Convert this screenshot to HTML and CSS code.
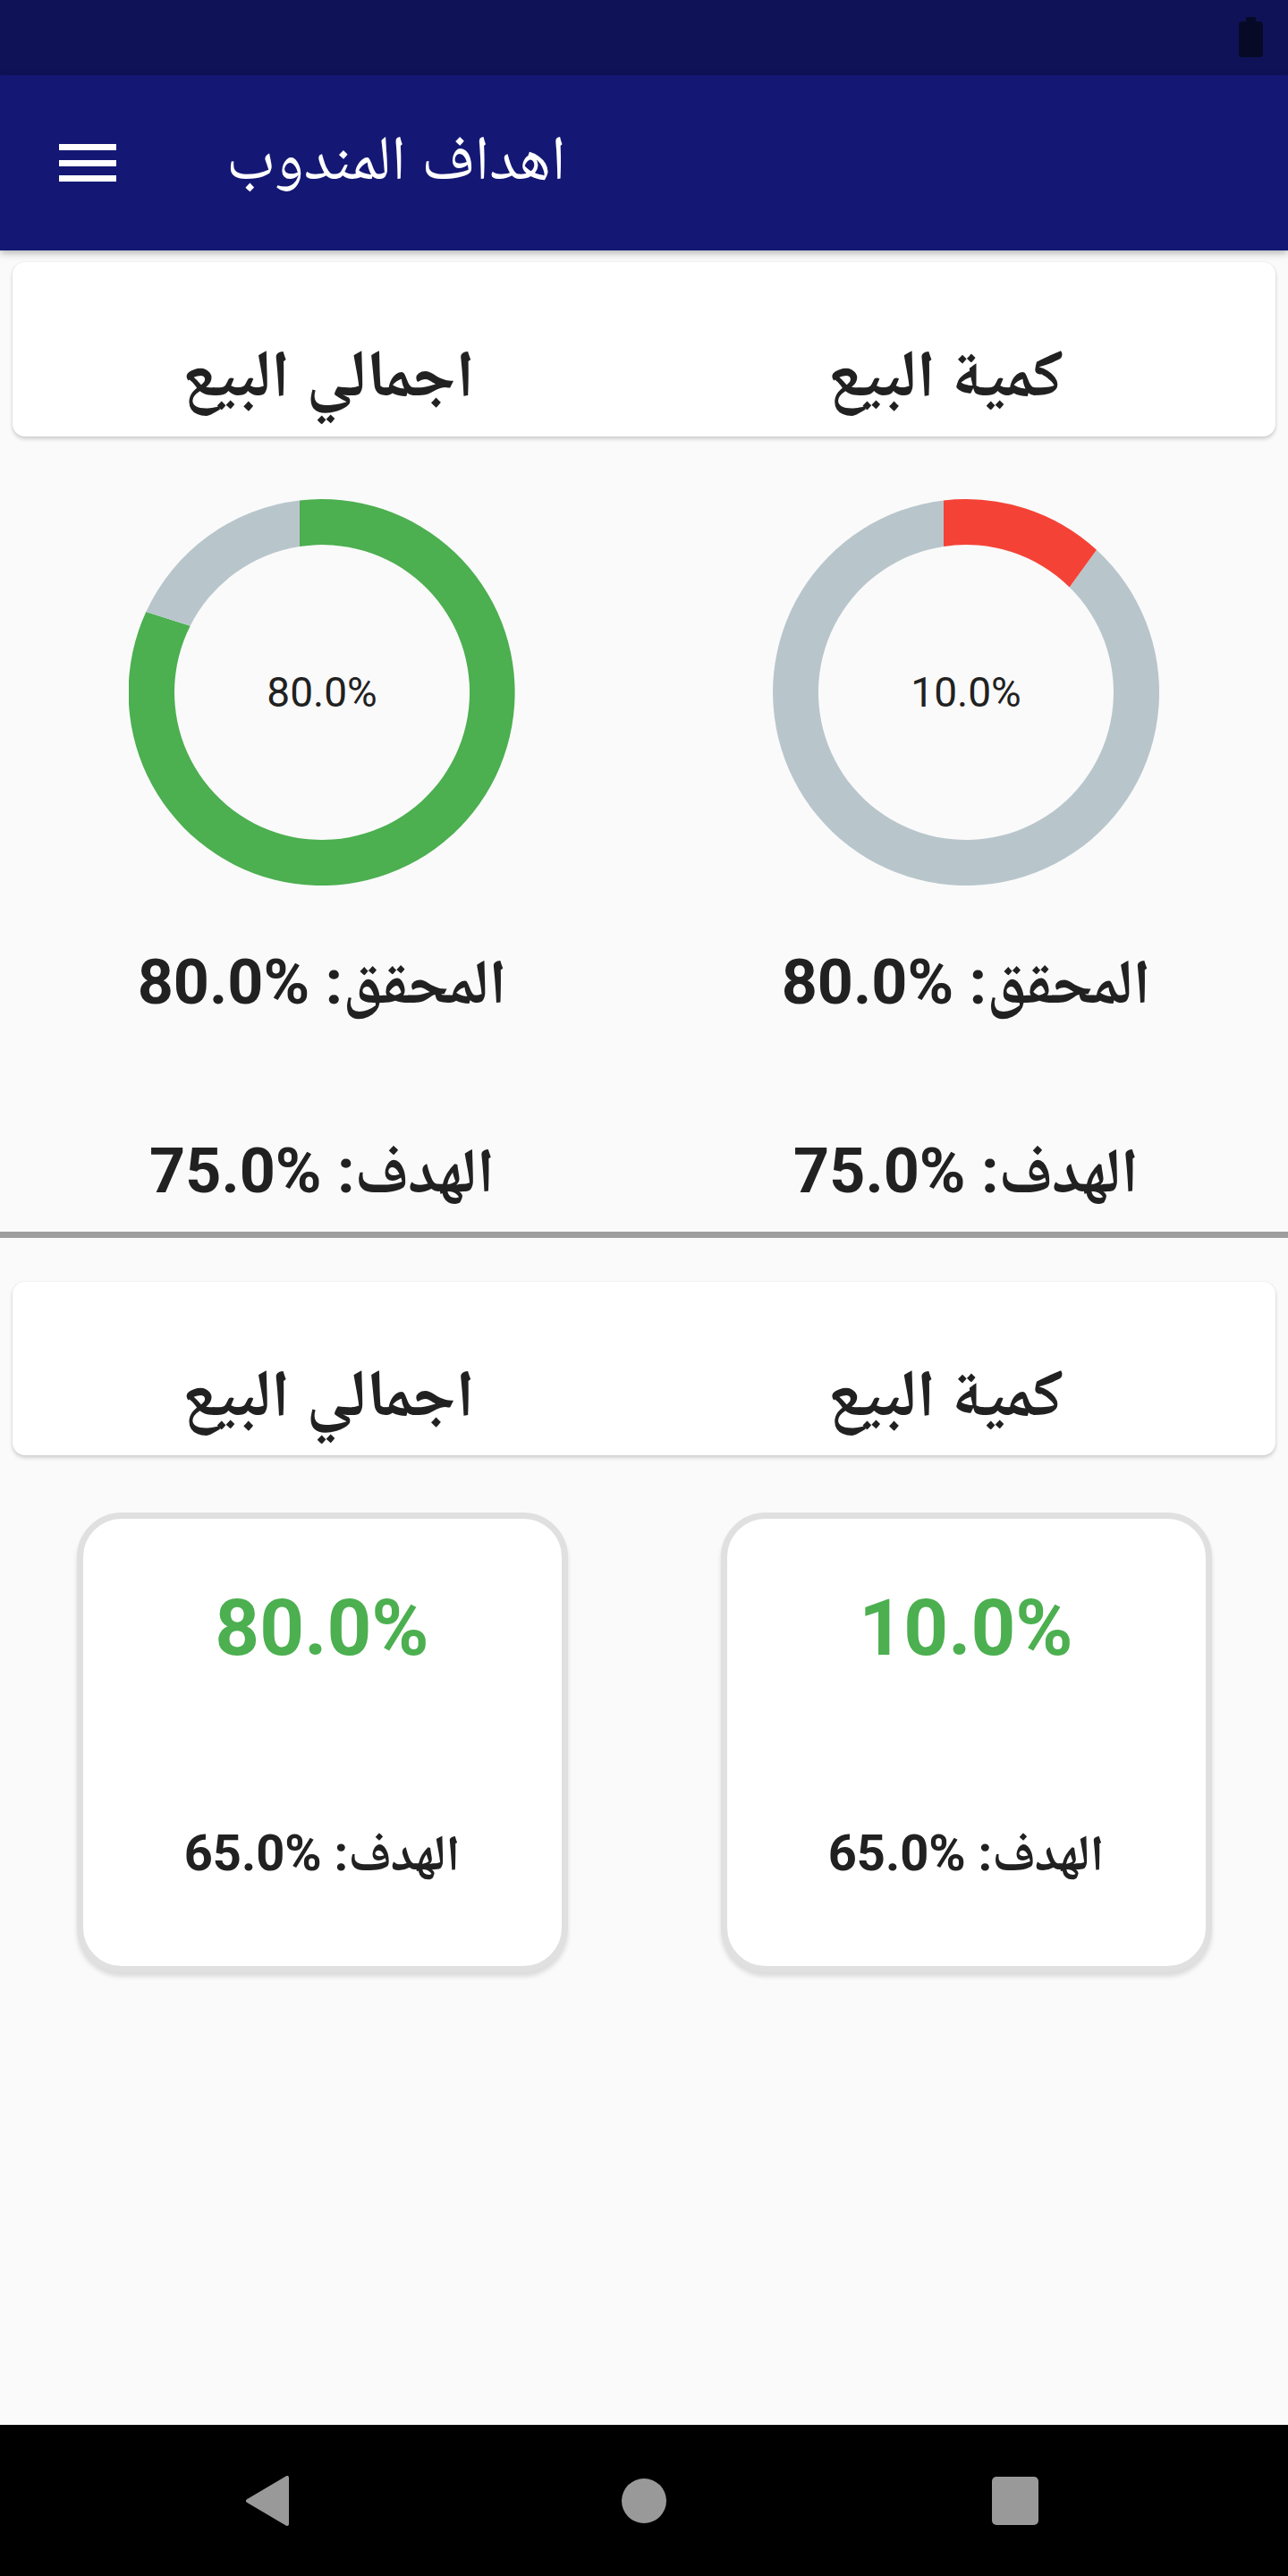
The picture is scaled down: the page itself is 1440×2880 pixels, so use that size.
FILE: index.html
```html
<!DOCTYPE html>
<html lang="ar">
<head>
<meta charset="utf-8">
<title>اهداف المندوب</title>
<link rel="stylesheet" href="styles.css">
</head>
<body>
<div class="screen">
  <div class="statusbar">
    <div class="battery"><span class="battery-nub"></span><span class="battery-body"></span></div>
  </div>
  <header class="appbar">
    <div class="menu"><span></span><span></span><span></span></div>
    <h1 class="title">اهداف المندوب</h1>
  </header>
  <main class="content">
    <section class="head-card">
      <div class="head-cell" dir="rtl">اجمالي البيع</div>
      <div class="head-cell head-cell-right" dir="rtl">كمية البيع</div>
    </section>

    <section class="charts">
      <div class="chart-col">
        <div class="donut">
          <svg class="donut-svg" viewBox="0 0 432 432" width="432" height="432">
            <path class="seg-green" d="M 191 1.5 A 216 216 0 1 1 19.3 126 L 68.7 141.7 A 165 165 0 1 0 191 52.9 Z"/>
            <path class="seg-grey" d="M 19.3 126 A 216 216 0 0 1 191 1.5 L 191 52.9 A 165 165 0 0 0 68.7 141.7 Z"/>
          </svg>
          <span class="donut-label">80.0%</span>
        </div>
        <p class="stat stat-achieved" dir="rtl">المحقق: <bdi dir="ltr">80.0%</bdi></p>
        <p class="stat stat-target" dir="rtl">الهدف: <bdi dir="ltr">75.0%</bdi></p>
      </div>
      <div class="chart-col">
        <div class="donut">
          <svg class="donut-svg" viewBox="0 0 432 432" width="432" height="432">
            <path class="seg-grey" d="M 362 56.8 A 216 216 0 1 1 191 1.5 L 191 52.9 A 165 165 0 1 0 331.7 98.4 Z"/>
            <path class="seg-red" d="M 191 1.5 A 216 216 0 0 1 362 56.8 L 331.7 98.4 A 165 165 0 0 0 191 52.9 Z"/>
          </svg>
          <span class="donut-label">10.0%</span>
        </div>
        <p class="stat stat-achieved" dir="rtl">المحقق: <bdi dir="ltr">80.0%</bdi></p>
        <p class="stat stat-target" dir="rtl">الهدف: <bdi dir="ltr">75.0%</bdi></p>
      </div>
    </section>

    <hr class="divider">

    <section class="head-card head-card-second">
      <div class="head-cell" dir="rtl">اجمالي البيع</div>
      <div class="head-cell head-cell-right" dir="rtl">كمية البيع</div>
    </section>

    <section class="tiles">
      <div class="tile">
        <div class="tile-value">80.0%</div>
        <div class="tile-target" dir="rtl">الهدف: <bdi dir="ltr">65.0%</bdi></div>
      </div>
      <div class="tile">
        <div class="tile-value">10.0%</div>
        <div class="tile-target" dir="rtl">الهدف: <bdi dir="ltr">65.0%</bdi></div>
      </div>
    </section>
  </main>
  <nav class="navbar">
    <svg class="nav-back" viewBox="0 0 48 56" width="48" height="56">
      <polygon points="46,2 46,54 2,28"/>
    </svg>
    <span class="nav-home"></span>
    <span class="nav-recent"></span>
  </nav>
</div>
</body>
</html>
```

FILE: styles.css
```css
* {
  box-sizing: border-box;
}

html, body {
  margin: 0;
  padding: 0;
}

body {
  background: #fafafa;
  font-family: Roboto, "Noto Naskh Arabic", "Noto Sans Arabic", "DejaVu Sans", sans-serif;
  color: #212121;
}

.screen {
  width: 1440px;
  height: 2880px;
  display: flex;
  flex-direction: column;
  background: #fafafa;
  overflow: hidden;
}

/* status bar */
.statusbar {
  height: 84px;
  flex: none;
  background: #0f1257;
  display: flex;
  justify-content: flex-end;
  padding: 19px 28px 0 0;
}

.battery {
  display: flex;
  flex-direction: column;
  align-items: center;
  width: 27px;
}

.battery-nub {
  width: 11px;
  height: 5px;
  background: #070a26;
  border-radius: 1px 1px 0 0;
}

.battery-body {
  width: 27px;
  height: 40px;
  background: #070a26;
  border-radius: 4px;
}

/* app bar */
.appbar {
  height: 196px;
  flex: none;
  background: #141874;
  display: flex;
  align-items: center;
  position: relative;
  z-index: 2;
  box-shadow: 0 3px 8px rgba(0, 0, 0, 0.28);
}

.menu {
  margin-left: 66px;
  width: 64px;
  display: flex;
  flex-direction: column;
  gap: 10.5px;
}

.menu span {
  display: block;
  height: 7px;
  background: #ffffff;
}

.title {
  margin: 0 0 12px 123px;
  font-size: 70px;
  font-weight: 400;
  line-height: 82px;
  color: #ffffff;
}

/* content */
.content {
  flex: 1;
  display: flex;
  flex-direction: column;
}

.head-card {
  margin: 13px 14px 0;
  height: 195px;
  background: #ffffff;
  border-radius: 14px;
  box-shadow: 0 3px 4px rgba(0, 0, 0, 0.16), 0 0 2px rgba(0, 0, 0, 0.1);
  display: grid;
  grid-template-columns: 1fr 1fr;
  padding-top: 75px;
}

.head-card-second {
  margin-top: 49px;
  height: 194px;
}

.head-cell {
  text-align: center;
  font-size: 74px;
  font-weight: 700;
  line-height: 100px;
  color: #212121;
}

.head-cell-right {
  padding-right: 32px;
}

.charts {
  display: grid;
  grid-template-columns: 720px 720px;
}

.chart-col {
  display: flex;
  flex-direction: column;
  align-items: center;
}

.donut {
  margin-top: 70px;
  width: 432px;
  height: 432px;
  display: grid;
  place-items: center;
}

.donut-svg,
.donut-label {
  grid-area: 1 / 1;
}

.donut-svg {
  display: block;
}

.seg-green { fill: #4caf50; }
.seg-grey { fill: #b8c6cc; }
.seg-red { fill: #f44336; }

.donut-label {
  font-size: 46px;
  line-height: 54px;
  font-weight: 400;
  color: #212121;
}

.stat {
  margin: 0;
  height: 82px;
  font-size: 70px;
  line-height: 82px;
  font-weight: 700;
  text-align: center;
  color: #212121;
  white-space: nowrap;
}

.stat-achieved {
  margin-top: 67px;
}

.stat-target {
  margin-top: 129px;
}

.divider {
  margin: 27px 0 0;
  height: 7px;
  border: none;
  background: #9e9e9e;
}

/* tiles */
.tiles {
  margin-top: 64px;
  display: grid;
  grid-template-columns: 720px 720px;
}

.tile {
  justify-self: center;
  width: 549px;
  height: 514px;
  background: #ffffff;
  border: 7px solid #e0e0e0;
  border-radius: 50px;
  box-shadow: 0 5px 5px rgba(0, 0, 0, 0.12);
  display: flex;
  flex-direction: column;
  align-items: center;
  padding-top: 71px;
}

.tile-value {
  font-size: 87px;
  line-height: 102px;
  font-weight: 700;
  color: #4caf50;
}

.tile-target {
  margin-top: 168px;
  font-size: 56px;
  line-height: 66px;
  font-weight: 700;
  color: #212121;
  white-space: nowrap;
}

/* navigation bar */
.navbar {
  height: 169px;
  flex: none;
  background: #000000;
  display: flex;
  align-items: center;
}

.nav-back {
  display: block;
  margin-left: 275px;
}

.nav-back polygon {
  fill: #999999;
  stroke: #999999;
  stroke-width: 4;
  stroke-linejoin: round;
}

.nav-home {
  display: block;
  margin-left: 372px;
  width: 50px;
  height: 50px;
  border-radius: 50%;
  background: #999999;
}

.nav-recent {
  display: block;
  margin-left: 364px;
  width: 52px;
  height: 54px;
  border-radius: 5px;
  background: #999999;
}
```
